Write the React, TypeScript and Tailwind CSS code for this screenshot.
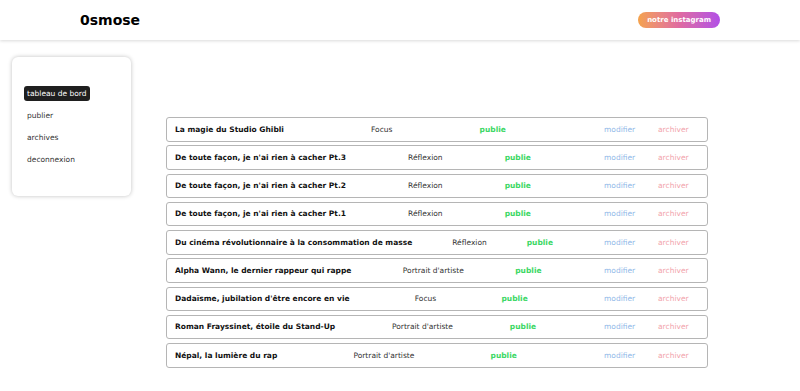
const ARTICLES = [
  { title: "La magie du Studio Ghibli", category: "Focus" },
  { title: "De toute façon, je n'ai rien à cacher Pt.3", category: "Réflexion" },
  { title: "De toute façon, je n'ai rien à cacher Pt.2", category: "Réflexion" },
  { title: "De toute façon, je n'ai rien à cacher Pt.1", category: "Réflexion" },
  { title: "Du cinéma révolutionnaire à la consommation de masse", category: "Réflexion" },
  { title: "Alpha Wann, le dernier rappeur qui rappe", category: "Portrait d'artiste" },
  { title: "Dadaïsme, jubilation d'être encore en vie", category: "Focus" },
  { title: "Roman Frayssinet, étoile du Stand-Up", category: "Portrait d'artiste" },
  { title: "Népal, la lumière du rap", category: "Portrait d'artiste" },
];

const NAV = ["tableau de bord", "publier", "archives", "deconnexion"];

function Header(): React.ReactElement {
  return (
    <header className="flex h-10 items-center justify-between bg-white pl-20 pr-20 shadow-[0_1px_3px_rgba(0,0,0,0.15)]">
      <span className="text-[14px] font-bold text-black">0smose</span>
      <a className="rounded-full bg-gradient-to-r from-[#f4a24a] via-[#e06aa0] to-[#b24ee6] px-[9px] py-[3px] text-[7px] font-bold text-white">
        notre instagram
      </a>
    </header>
  );
}

function Sidebar(): React.ReactElement {
  return (
    <aside className="ml-3 mt-[17px] h-[139px] w-[119px] rounded-md bg-white pt-[29px] pl-3 shadow-[0_0_4px_rgba(0,0,0,0.25)]">
      <ul className="flex flex-col items-start gap-[7px] text-[7.5px] leading-[9px] text-[#333]">
        {NAV.map((item, i) => (
          <li
            key={item}
            className={
              i === 0
                ? "rounded-[3px] bg-[#1f1f1f] px-[3px] py-[3px] text-white"
                : "px-[3px] py-[3px]"
            }
          >
            {item}
          </li>
        ))}
      </ul>
    </aside>
  );
}

function ArticleRow({
  title,
  category,
}: {
  title: string;
  category: string;
}): React.ReactElement {
  return (
    <li className="flex h-[24.5px] items-center rounded-[3px] border border-[#b5b5b5] pl-2 text-[7.5px]">
      <div className="flex w-[418px] items-center justify-between">
        <span className="font-bold text-[#111]">{title}</span>
        <span className="text-[#333]">{category}</span>
        <span className="font-bold text-[#3cd764]">publie</span>
        <span />
      </div>
      <span className="ml-[11px] w-[54px] text-[#8fb8e8]">modifier</span>
      <span className="text-[#f2a3ab]">archiver</span>
    </li>
  );
}

export default function App(): React.ReactElement {
  return (
    <div className="min-h-screen bg-white font-['DejaVu_Sans',sans-serif]">
      <Header />
      <div className="flex">
        <Sidebar />
        <main className="ml-[35px] mt-[77px] w-[542px]">
          <ul className="flex flex-col gap-[3.75px]">
            {ARTICLES.map((a) => (
              <ArticleRow key={a.title} title={a.title} category={a.category} />
            ))}
          </ul>
        </main>
      </div>
    </div>
  );
}
